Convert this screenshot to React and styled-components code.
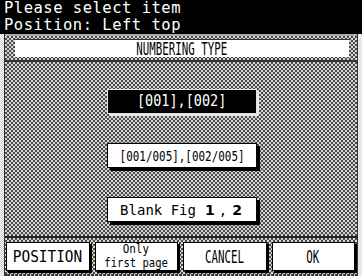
import React from "react";
import styled, { createGlobalStyle } from "styled-components";

const GlobalStyle = createGlobalStyle`
  html, body {
    margin: 0;
    padding: 0;
    background: #fff;
  }
`;

const checker = `
  background-color: #8c8c8c;
  background-image: repeating-conic-gradient(#4a4a4a 0 25%, #d4d4d4 0 50%);
  background-size: 4px 4px;
`;

const lightDots = `
  background-color: #f2f2f2;
  background-image: repeating-conic-gradient(#cfcfcf 0 25%, #ffffff 0 50%);
  background-size: 2px 2px;
`;

const Screen = styled.div`
  width: 362px;
  height: 276px;
  box-sizing: border-box;
  display: flex;
  flex-direction: column;
  overflow: hidden;
  font-family: "DejaVu Sans Mono", "Liberation Mono", monospace;
  ${lightDots}
`;

const Header = styled.div`
  height: 34px;
  background: #000;
  color: #fff;
  padding: 0 0 0 4px;
  box-sizing: border-box;
  font-size: 15.5px;
  line-height: 17px;
  letter-spacing: 0.5px;
`;

const Body = styled.div`
  flex: 1;
  margin: 0 4px 0 4px;
  display: flex;
  flex-direction: column;
  border-left: 1px solid #333;
  border-right: 1px solid #333;
`;

const TitleFrame = styled.div`
  ${checker}
  padding: 3px 8px 3px 10px;
  border-top: 2px solid #aaa;
  border-bottom: 2px solid #333;
`;

const TitleBar = styled.div`
  height: 17px;
  background: #fff;
  border-top: 1px solid #333;
  display: flex;
  align-items: center;
  justify-content: center;
  overflow: hidden;
`;

const Narrow = styled.span`
  display: block;
  font-size: ${p => p.size || 15}px;
  line-height: ${p => p.lh || p.size || 15}px;
  transform: scaleX(${p => p.sx || 0.7});
  white-space: nowrap;
  color: inherit;
`;

const Main = styled.div`
  ${checker}
  flex: 1;
  display: flex;
  flex-direction: column;
  align-items: center;
  padding: 27px 0 0 0;
  gap: 29px;
`;

const Choice = styled.div`
  width: 150px;
  height: 25px;
  margin-left: 2px;
  box-sizing: border-box;
  display: flex;
  align-items: center;
  justify-content: center;
  background: ${p => (p.selected ? "#000" : "#fff")};
  color: ${p => (p.selected ? "#fff" : "#000")};
  border: 1px solid ${p => (p.selected ? "#e0e0e0" : "#000")};
  box-shadow: ${p => (p.selected ? "2px 2px 0 #e8e8e8" : "3px 3px 0 #000")};
  font-size: 14px;
  white-space: nowrap;
`;

const Fig = styled.span`
  font-family: "DejaVu Sans", sans-serif;
  font-weight: bold;
  font-size: 14px;
  margin: 0 ${p => p.right || 2}px 0 ${p => p.left || 2}px;
`;

const Footer = styled.div`
  ${checker}
  border-top: 2px solid #222;
  padding: 4px 2px 3px 1px;
  display: flex;
  gap: 5px;
  border-bottom: 2px dotted #333;
`;

const Key = styled.div`
  flex: 1;
  height: 29px;
  box-sizing: border-box;
  background: #fff;
  color: #000;
  border: 1px solid #000;
  box-shadow: 2px 2px 0 #000;
  display: flex;
  flex-direction: column;
  align-items: center;
  justify-content: center;
`;

export default function App() {
  return (
    <>
      <GlobalStyle />
      <Screen>
        <Header>
          <div>Please select item</div>
          <div>Position: Left top</div>
        </Header>
        <Body>
          <TitleFrame>
            <TitleBar>
              <Narrow size={18} sx={0.6}>NUMBERING TYPE</Narrow>
            </TitleBar>
          </TitleFrame>
          <Main>
            <Choice selected>
              <Narrow size={15} sx={0.9}>[001],[002]</Narrow>
            </Choice>
            <Choice>
              <Narrow size={14} sx={0.78}>[001/005],[002/005]</Narrow>
            </Choice>
            <Choice>
              Blank Fig<Fig left={9} right={4}>1</Fig>,<Fig left={5}>2</Fig>
            </Choice>
          </Main>
          <Footer>
            <Key>
              <Narrow size={16} sx={0.9}>POSITION</Narrow>
            </Key>
            <Key>
              <Narrow size={11.5} lh={13} sx={0.95}>Only</Narrow>
              <Narrow size={12} lh={14} sx={0.88}>first page</Narrow>
            </Key>
            <Key>
              <Narrow size={18} sx={0.6}>CANCEL</Narrow>
            </Key>
            <Key>
              <Narrow size={18} sx={0.6}>OK</Narrow>
            </Key>
          </Footer>
        </Body>
      </Screen>
    </>
  );
}
